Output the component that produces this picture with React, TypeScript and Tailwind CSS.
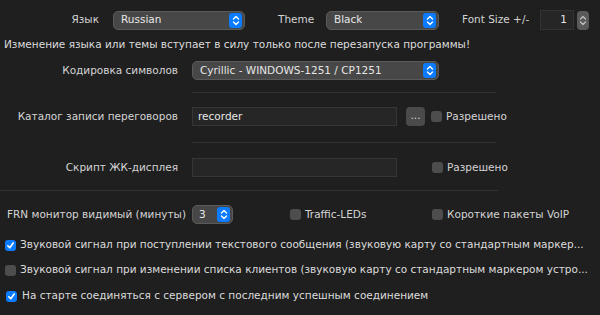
import { ReactNode } from 'react';

const FONT = { fontFamily: '"DejaVu Sans", Verdana, sans-serif' };

function Chevrons({ color = 'white' }: { color?: string }) {
  return (
    <svg width="8" height="11" viewBox="0 0 8 11" fill="none">
      <path d="M1.5 4 L4 1.5 L6.5 4" stroke={color} strokeWidth="1.4" strokeLinecap="round" strokeLinejoin="round" />
      <path d="M1.5 7 L4 9.5 L6.5 7" stroke={color} strokeWidth="1.4" strokeLinecap="round" strokeLinejoin="round" />
    </svg>
  );
}

function Select({ value, width }: { value: string; width: string }) {
  return (
    <div className={`${width} flex h-[19px] shrink-0 items-center justify-between rounded-[5px] border border-[#5a5a5a] bg-[#474747] pl-[7px] pr-[2px]`}>
      <span className="truncate text-[#e6e6e6]">{value}</span>
      <span className="flex h-[15px] w-[13px] shrink-0 items-center justify-center rounded-[3px] bg-[#0b7bff]">
        <Chevrons />
      </span>
    </div>
  );
}

function Box({ checked = false }: { checked?: boolean }) {
  if (checked) {
    return (
      <span className="flex h-[11px] w-[11px] shrink-0 items-center justify-center rounded-[3px] bg-[#0b7bff]">
        <svg width="9" height="9" viewBox="0 0 9 9" fill="none">
          <path d="M1.8 4.8 L3.8 6.8 L7.2 2" stroke="white" strokeWidth="1.6" strokeLinecap="round" strokeLinejoin="round" />
        </svg>
      </span>
    );
  }
  return <span className="block h-[11px] w-[11px] shrink-0 rounded-[3px] bg-[#4d4d4d]" />;
}

function Label({ children }: { children: ReactNode }) {
  return <span className="w-[178px] shrink-0 text-right text-[#d4d4d4]">{children}</span>;
}

function TextField({ value = '' }: { value?: string }) {
  return (
    <div className="ml-[14px] flex h-[19px] w-[205px] shrink-0 items-center border border-[#363636] bg-[#262626] pl-[5px] text-[#e6e6e6]">
      {value}
    </div>
  );
}

function Check({ checked, label }: { checked?: boolean; label: string }) {
  return (
    <div className="flex items-center">
      <Box checked={checked} />
      <span className="ml-[4px] whitespace-nowrap text-[#d4d4d4]">{label}</span>
    </div>
  );
}

export default function App() {
  return (
    <div className="h-[315px] w-[600px] overflow-hidden bg-[#1f1f1f] text-[10.5px] text-[#dcdcdc]" style={FONT}>
      {/* Language / theme / font size */}
      <div className="mt-[10px] flex h-5 items-center">
        <span className="w-[99px] shrink-0 text-right text-[#d4d4d4]">Язык</span>
        <div className="ml-[14px]">
          <Select value="Russian" width="w-[132px]" />
        </div>
        <span className="ml-[33px] w-[40px] whitespace-nowrap text-[#d4d4d4]">Theme</span>
        <div className="ml-[8px]">
          <Select value="Black" width="w-[113px]" />
        </div>
        <span className="ml-[23px] w-[70px] whitespace-nowrap text-[#d4d4d4]">Font Size +/-</span>
        <div className="ml-[8px] flex h-5 w-[34px] shrink-0 items-center justify-end border border-[#333] bg-[#262626] pr-[6px] text-[#e6e6e6]">1</div>
        <span className="ml-[3px] flex h-[19px] w-3 shrink-0 items-center justify-center rounded-[4px] bg-[#5a5a5a]">
          <Chevrons color="#bdbdbd" />
        </span>
      </div>

      <div className="mt-[5px] h-[18px] whitespace-nowrap pl-[4px] leading-[18px] text-[#dcdcdc]">
        Изменение языка или темы вступает в силу только после перезапуска программы!
      </div>

      {/* Encoding */}
      <div className="mt-[8px] flex h-[19px] items-center">
        <Label>Кодировка символов</Label>
        <div className="ml-[14px]">
          <Select value="Cyrillic - WINDOWS-1251 / CP1251" width="w-[247px]" />
        </div>
      </div>
      <div className="ml-[192px] mt-[12px] h-px w-[304px] bg-[#333]" />

      {/* Record catalog */}
      <div className="mt-[14px] flex h-[19px] items-center">
        <Label>Каталог записи переговоров</Label>
        <TextField value="recorder" />
        <span className="ml-[9px] flex h-[19px] w-[19px] shrink-0 items-center justify-center rounded-[4px] bg-[#4a4a4a] pb-[2px] text-[#dcdcdc]">...</span>
        <div className="ml-[6px]">
          <Check label="Разрешено" />
        </div>
      </div>
      <div className="ml-[192px] mt-[16px] h-px w-[304px] bg-[#333]" />

      {/* LCD script */}
      <div className="mt-[15px] flex h-[19px] items-center">
        <Label>Скрипт ЖК-дисплея</Label>
        <TextField />
        <div className="ml-[35px]">
          <Check label="Разрешено" />
        </div>
      </div>
      <div className="mt-[13px] h-px w-[498px] bg-[#333]" />

      {/* FRN monitor */}
      <div className="mt-[14px] flex h-[19px] items-center">
        <span className="w-[192px] shrink-0 whitespace-nowrap pl-[7px] text-[#d4d4d4]">FRN монитор видимый (минуты)</span>
        <div className="flex h-[19px] w-[41px] shrink-0 items-center justify-between rounded-[5px] border border-[#5a5a5a] bg-[#474747] pl-[6px] pr-[2px] text-[#e6e6e6]">
          3
          <span className="flex h-[15px] w-[13px] items-center justify-center rounded-[3px] bg-[#0b7bff]">
            <Chevrons />
          </span>
        </div>
        <div className="ml-[57px] w-[142px] shrink-0">
          <Check label="Traffic-LEDs" />
        </div>
        <Check label="Короткие пакеты VoIP" />
      </div>

      {/* Checkbox options */}
      <div className="mt-[13px] flex h-[16px] items-center pl-[5px]">
        <Box checked />
        <span className="ml-[4px] whitespace-nowrap">Звуковой сигнал при поступлении текстового сообщения (звуковую карту со стандартным маркер...</span>
      </div>
      <div className="mt-[9px] flex h-[16px] items-center pl-[5px]">
        <Box />
        <span className="ml-[4px] whitespace-nowrap">Звуковой сигнал при изменении списка клиентов (звуковую карту со стандартным маркером устро...</span>
      </div>
      <div className="mt-[10px] flex h-[16px] items-center pl-[6px]">
        <Box checked />
        <span className="ml-[5px] whitespace-nowrap">На старте соединяться с сервером с последним успешным соединением</span>
      </div>
    </div>
  );
}
